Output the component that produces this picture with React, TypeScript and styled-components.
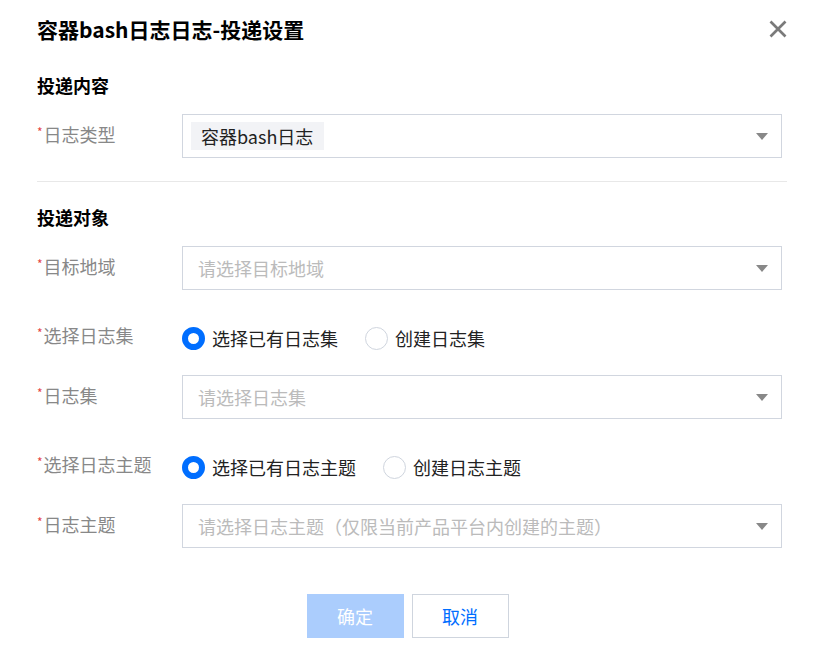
import React, { useState } from "react";
import styled, { createGlobalStyle } from "styled-components";

const GlobalStyle = createGlobalStyle`
  html, body {
    margin: 0;
    padding: 0;
    background: #fff;
  }
  body {
    font-family: "Noto Sans CJK SC", "Noto Sans", sans-serif;
    color: #333;
  }
`;

const Dialog = styled.div`
  width: 825px;
  height: 654px;
  box-sizing: border-box;
  padding: 14px 38px 0 37px;
  background: #fff;
`;

const Header = styled.div`
  display: flex;
  align-items: center;
  justify-content: space-between;
  height: 30px;
`;

const Title = styled.h1`
  margin: 0;
  font-size: 21px;
  line-height: 30px;
  font-weight: bold;
  color: #000;
`;

const CloseButton = styled.button`
  border: 0;
  background: none;
  padding: 0;
  width: 22px;
  height: 22px;
  margin-right: -2px;
  display: flex;
  align-items: center;
  justify-content: center;
  cursor: pointer;
`;

const SectionTitle = styled.h2<{ $top: number }>`
  margin: ${(p) => p.$top}px 0 0;
  font-size: 18px;
  line-height: 24px;
  font-weight: bold;
  color: #000;
`;

const Divider = styled.div`
  height: 1px;
  background: #e8e8e8;
  margin-top: 23px;
`;

const FormItem = styled.div<{ $top: number }>`
  display: flex;
  align-items: center;
  margin-top: ${(p) => p.$top}px;
`;

const Label = styled.div<{ $lift?: number }>`
  width: 145px;
  height: 24px;
  flex-shrink: 0;
  font-size: 18px;
  line-height: 24px;
  color: #888;
  position: relative;
  top: ${(p) => -(p.$lift ?? 2)}px;
`;

const Star = styled.span`
  color: #e54545;
  font-size: 12px;
  line-height: 1;
  vertical-align: 5px;
  margin-right: 1px;
`;

const Select = styled.div`
  width: 600px;
  height: 44px;
  box-sizing: border-box;
  border: 1px solid #d1d6df;
  background: #fff;
  display: flex;
  align-items: center;
  padding: 0 13px 0 15px;
  cursor: pointer;
`;

const Placeholder = styled.span`
  flex: 1;
  font-size: 18px;
  color: #bbb;
  white-space: nowrap;
`;

const TagList = styled.div`
  flex: 1;
  display: flex;
  margin-left: -7px;
`;

const Tag = styled.span`
  background: #f2f3f6;
  color: #222;
  font-size: 18px;
  line-height: 28px;
  height: 28px;
  padding: 0 11px 0 10px;
`;

const Arrow = styled.span`
  width: 0;
  height: 0;
  border-left: 6px solid transparent;
  border-right: 6px solid transparent;
  border-top: 7px solid #888;
`;

const RadioGroup = styled.div`
  display: flex;
  align-items: center;
  gap: 27px;
  height: 23px;
`;

const RadioOption = styled.label`
  display: flex;
  align-items: center;
  gap: 7px;
  font-size: 18px;
  line-height: 22px;
  color: #222;
  cursor: pointer;
`;

const RadioDot = styled.span<{ $checked: boolean }>`
  width: 23px;
  height: 23px;
  box-sizing: border-box;
  border-radius: 50%;
  border: ${(p) => (p.$checked ? "6px solid #006eff" : "1px solid #cfd5de")};
  background: #fff;
`;

const Footer = styled.div`
  display: flex;
  justify-content: center;
  gap: 8px;
  margin-top: 46px;
  padding-right: 9px;
`;

const Button = styled.button<{ $primary?: boolean }>`
  width: 97px;
  height: 44px;
  font-family: inherit;
  font-size: 18px;
  cursor: pointer;
  border: 1px solid ${(p) => (p.$primary ? "#abcdfd" : "#cfd5de")};
  background: ${(p) => (p.$primary ? "#abcdfd" : "#fff")};
  color: ${(p) => (p.$primary ? "#fff" : "#006eff")};
`;

const Radio = ({
  checked,
  label,
  onClick,
}: {
  checked: boolean;
  label: string;
  onClick: () => void;
}) => (
  <RadioOption onClick={onClick}>
    <RadioDot $checked={checked} />
    {label}
  </RadioOption>
);

const App = () => {
  const [logset, setLogset] = useState(0);
  const [topic, setTopic] = useState(0);

  return (
    <Dialog>
      <GlobalStyle />
      <Header>
        <Title>容器bash日志日志-投递设置</Title>
        <CloseButton>
          <svg width="18" height="18" viewBox="0 0 18 18">
            <path d="M1.5 1.5 L16.5 16.5 M16.5 1.5 L1.5 16.5" stroke="#7a7a7a" strokeWidth="2.7" />
          </svg>
        </CloseButton>
      </Header>

      <SectionTitle $top={29}>投递内容</SectionTitle>
      <FormItem $top={17}>
        <Label>
          <Star>*</Star>日志类型
        </Label>
        <Select>
          <TagList>
            <Tag>容器bash日志</Tag>
          </TagList>
          <Arrow />
        </Select>
      </FormItem>
      <Divider />

      <SectionTitle $top={23}>投递对象</SectionTitle>
      <FormItem $top={17}>
        <Label>
          <Star>*</Star>目标地域
        </Label>
        <Select>
          <Placeholder>请选择目标地域</Placeholder>
          <Arrow />
        </Select>
      </FormItem>

      <FormItem $top={36}>
        <Label $lift={3}>
          <Star>*</Star>选择日志集
        </Label>
        <RadioGroup>
          <Radio checked={logset === 0} label="选择已有日志集" onClick={() => setLogset(0)} />
          <Radio checked={logset === 1} label="创建日志集" onClick={() => setLogset(1)} />
        </RadioGroup>
      </FormItem>

      <FormItem $top={25}>
        <Label>
          <Star>*</Star>日志集
        </Label>
        <Select>
          <Placeholder>请选择日志集</Placeholder>
          <Arrow />
        </Select>
      </FormItem>

      <FormItem $top={36}>
        <Label $lift={3}>
          <Star>*</Star>选择日志主题
        </Label>
        <RadioGroup>
          <Radio checked={topic === 0} label="选择已有日志主题" onClick={() => setTopic(0)} />
          <Radio checked={topic === 1} label="创建日志主题" onClick={() => setTopic(1)} />
        </RadioGroup>
      </FormItem>

      <FormItem $top={25}>
        <Label>
          <Star>*</Star>日志主题
        </Label>
        <Select>
          <Placeholder>请选择日志主题（仅限当前产品平台内创建的主题）</Placeholder>
          <Arrow />
        </Select>
      </FormItem>

      <Footer>
        <Button $primary>确定</Button>
        <Button>取消</Button>
      </Footer>
    </Dialog>
  );
};

export default App;
